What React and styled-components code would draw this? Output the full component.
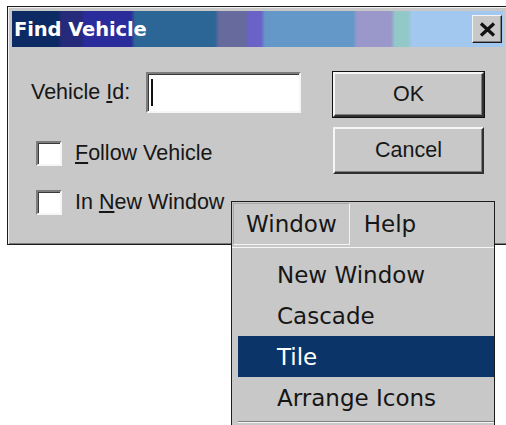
import React from "react";
import styled, { createGlobalStyle } from "styled-components";

const Global = createGlobalStyle`
  html, body { margin: 0; padding: 0; background: #ffffff; }
  body { width: 506px; height: 425px; overflow: hidden; }
`;

const FACE = "#c8c8c8";

const Screen = styled.div`
  position: relative;
  width: 506px;
  height: 425px;
  overflow: hidden;
  box-sizing: border-box;
  padding: 6px 0 0 7px;
  font-family: "Liberation Sans", Arial, sans-serif;
  color: #161616;
`;

const Dialog = styled.div`
  width: 501px;
  box-sizing: border-box;
  background: ${FACE};
  border: 1px solid #1c1c1c;
  box-shadow: inset 1px 1px 0 #f2f2f2, inset -1px -1px 0 #7a7a7a;
  padding: 4px;
`;

const TitleBar = styled.div`
  height: 36px;
  display: flex;
  align-items: center;
  justify-content: space-between;
  padding: 0 1px 0 2px;
  background: linear-gradient(
    90deg,
    #0c2a64 0px, #0c2a64 46px,
    #262a7a 50px, #262a7a 69px,
    #2b2c9c 73px, #2b2c9c 119px,
    #2c6696 123px, #2c6696 203px,
    #676a9c 207px, #676a9c 233px,
    #6a62c6 237px, #6a62c6 249px,
    #6398c8 253px, #6398c8 341px,
    #9a98ca 345px, #9a98ca 379px,
    #92c8c8 383px, #92c8c8 396px,
    #a2c8f0 400px, #a2c8f0 100%
  );
`;

const Title = styled.span`
  font-family: "DejaVu Sans", Verdana, sans-serif;
  font-weight: bold;
  font-size: 19.5px;
  color: #ffffff;
  letter-spacing: -0.1px;
`;

const CloseButton = styled.div`
  width: 30px;
  height: 28px;
  box-sizing: border-box;
  background: ${FACE};
  border: 1px solid;
  border-color: #f4f4f4 #1c1c1c #1c1c1c #f4f4f4;
  box-shadow: inset -1px -1px 0 #808080;
  display: flex;
  align-items: center;
  justify-content: center;
`;

const Body = styled.div`
  display: grid;
  grid-template-columns: 1fr 151px;
  height: 193px;
  box-sizing: border-box;
  padding: 25px 19px 25px 19px;
`;

const LeftColumn = styled.div`
  display: flex;
  flex-direction: column;
`;

const FieldRow = styled.div`
  display: flex;
  align-items: center;
  gap: 16px;
  height: 41px;
`;

const Label = styled.span`
  font-size: 21.5px;
  line-height: 1;
  white-space: nowrap;
`;

const TextBox = styled.div`
  width: 155px;
  height: 41px;
  box-sizing: border-box;
  background: #ffffff;
  border: 2px solid;
  border-color: #7c7c7c #f6f6f6 #f6f6f6 #7c7c7c;
  box-shadow: inset 1px 1px 0 #3a3a3a;
  display: flex;
  align-items: center;
  padding-left: 3px;
`;

const Caret = styled.span`
  width: 2px;
  height: 27px;
  background: #111111;
`;

const CheckRow = styled.label`
  display: flex;
  align-items: center;
  gap: 13px;
  height: 25px;
  margin-left: 5px;
  margin-top: ${(p) => p.$gap}px;
`;

const Box = styled.span`
  width: 26px;
  height: 25px;
  box-sizing: border-box;
  background: #ffffff;
  border: 2px solid;
  border-color: #7c7c7c #f6f6f6 #f6f6f6 #7c7c7c;
  box-shadow: inset 1px 1px 0 #3a3a3a;
`;

const RightColumn = styled.div`
  display: flex;
  flex-direction: column;
  gap: 10px;
`;

const Button = styled.div`
  height: ${(p) => p.$h}px;
  box-sizing: border-box;
  background: ${FACE};
  border: 2px solid;
  border-color: #f6f6f6 #303030 #303030 #f6f6f6;
  box-shadow: inset -1px -1px 0 #808080;
  outline: ${(p) => (p.$default ? "1px solid #111" : "none")};
  outline-offset: 0;
  display: flex;
  align-items: center;
  justify-content: center;
  font-size: 21.5px;
`;

const Menu = styled.div`
  position: absolute;
  left: 231px;
  top: 201px;
  width: 264px;
  height: 224px;
  display: flex;
  flex-direction: column;
  font-family: "DejaVu Sans", Verdana, sans-serif;
  font-size: 23px;
  color: #161616;
`;

const MenuBar = styled.div`
  height: 46px;
  box-sizing: border-box;
  display: flex;
  background: ${FACE};
  border: 1px solid #1c1c1c;
  border-bottom: none;
  padding: 1px 0 0 1px;
`;

const MenuTitle = styled.div`
  height: 42px;
  box-sizing: border-box;
  display: flex;
  align-items: center;
  padding: 0 ${(p) => (p.$open ? 12 : 13)}px;
  border: 1px solid ${(p) => (p.$open ? "#f2f2f2" : "transparent")};
  border-top-color: ${(p) => (p.$open ? "#a8a8a8" : "transparent")};
  border-left-color: ${(p) => (p.$open ? "#a8a8a8" : "transparent")};
`;

const Dropdown = styled.div`
  flex: 1;
  box-sizing: border-box;
  background: ${FACE};
  border-left: 1px solid #1c1c1c;
  border-right: 1px solid #1c1c1c;
  box-shadow: inset 0 1px 0 #f6f6f6;
  padding: 7px 0 0 6px;
  display: flex;
  flex-direction: column;
`;

const MenuItem = styled.div`
  height: 41px;
  display: flex;
  align-items: center;
  padding-left: 39px;
  background: ${(p) => (p.$active ? "#0b3468" : "transparent")};
  color: ${(p) => (p.$active ? "#ffffff" : "inherit")};
`;

const Separator = styled.div`
  margin-top: 3px;
  height: 1px;
  background: #808080;
  box-shadow: 0 1px 0 #f6f6f6;
`;

export default function App() {
  return (
    <Screen>
      <Global />
      <Dialog>
        <TitleBar>
          <Title>Find Vehicle</Title>
          <CloseButton>
            <svg width="17" height="15" viewBox="0 0 17 15">
              <path d="M2 1.5 L15 13.5 M15 1.5 L2 13.5" stroke="#111" strokeWidth="3.2" />
            </svg>
          </CloseButton>
        </TitleBar>
        <Body>
          <LeftColumn>
            <FieldRow>
              <Label>
                Vehicle <u>I</u>d:
              </Label>
              <TextBox>
                <Caret />
              </TextBox>
            </FieldRow>
            <CheckRow $gap={28}>
              <Box />
              <Label>
                <u>F</u>ollow Vehicle
              </Label>
            </CheckRow>
            <CheckRow $gap={24}>
              <Box />
              <Label>
                In <u>N</u>ew Window
              </Label>
            </CheckRow>
          </LeftColumn>
          <RightColumn>
            <Button $h={45} $default>OK</Button>
            <Button $h={47}>Cancel</Button>
          </RightColumn>
        </Body>
      </Dialog>
      <Menu>
        <MenuBar>
          <MenuTitle $open>Window</MenuTitle>
          <MenuTitle>Help</MenuTitle>
        </MenuBar>
        <Dropdown>
          <MenuItem>New Window</MenuItem>
          <MenuItem>Cascade</MenuItem>
          <MenuItem $active>Tile</MenuItem>
          <MenuItem>Arrange Icons</MenuItem>
          <Separator />
        </Dropdown>
      </Menu>
    </Screen>
  );
}
